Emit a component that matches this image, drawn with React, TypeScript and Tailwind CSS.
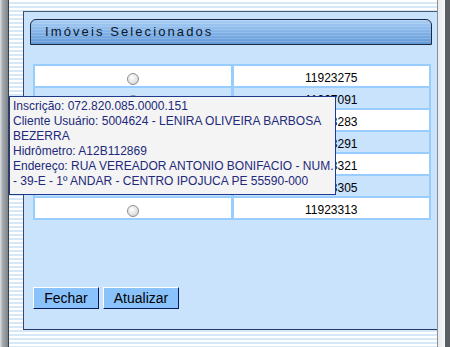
const rows = [
  "11923275",
  "11927091",
  "11923283",
  "11923291",
  "11923321",
  "11923305",
  "11923313",
];

const tooltipLines = [
  "Inscrição: 072.820.085.0000.151",
  "Cliente Usuário: 5004624 - LENIRA OLIVEIRA BARBOSA",
  "BEZERRA",
  "Hidrômetro: A12B112869",
  "Endereço: RUA VEREADOR ANTONIO BONIFACIO - NUM.",
  "- 39-E - 1º ANDAR - CENTRO IPOJUCA PE 55590-000",
];

function Radio() {
  return (
    <span className="block w-[12px] h-[12px] rounded-full border border-[#8e8e8e] bg-[radial-gradient(circle_at_40%_35%,#ffffff_0%,#e4e4e4_55%,#c4c4c4_100%)]" />
  );
}

export default function App() {
  return (
    <div className="relative flex w-[450px] h-[347px] overflow-hidden font-['Liberation_Sans',Arial,sans-serif]">
      {/* left window edge */}
      <div className="w-[8px] h-full bg-[linear-gradient(to_right,#dcdfe2,#a3a8ad_35%,#7e848a)] border-r border-[#3b3f44] box-content" />

      {/* striped page */}
      <div className="flex-1 h-full pt-[11px] pl-[14px] bg-[repeating-linear-gradient(to_bottom,#ffffff_0_2px,#d5e8f7_2px_4px)]">
        <div className="h-[319px] bg-[#cae3fc] border-l border-t border-b border-l-[#3c4a63] border-t-[#4a5a74] border-b-[#26386a] flex flex-col">
          {/* header bar */}
          <div className="mt-[7px] ml-[6px] mr-[5px] h-[26px] rounded-tl-[6px] rounded-tr-[6px] border border-[#1b2a44] bg-[repeating-linear-gradient(to_bottom,rgba(255,255,255,0.16)_0_1px,transparent_1px_3px),linear-gradient(to_bottom,#a9cef4,#82b3e8_50%,#6499d6)] flex items-center pl-[14px]">
            <span className="text-[13px] tracking-[2.1px] text-[#0e1628]">Imóveis Selecionados</span>
          </div>

          {/* table */}
          <div className="mt-[19px] ml-[9px] mr-[6px] bg-[#99ccff] p-[2px] grid grid-cols-2 gap-x-[3px] gap-y-[2px]">
            {rows.map((n, i) => {
              const bg = i % 2 === 0 ? "bg-white" : "bg-[#cae3fc]";
              return [
                <div key={`r${n}`} className={`h-[20px] ${bg} flex items-center justify-center pt-[5px]`}>
                  <Radio />
                </div>,
                <div key={`n${n}`} className={`h-[20px] ${bg} flex items-center justify-center pt-[3px] text-[12px] text-black`}>
                  {n}
                </div>,
              ];
            })}
          </div>

          {/* buttons */}
          <div className="mt-[67px] ml-[9px] flex gap-[4px]">
            <button className="w-[66px] h-[22px] bg-[#8ac2fb] border border-t-white border-l-white border-r-[#0b1858] border-b-[#0b1858] text-[14px] text-black leading-none">
              Fechar
            </button>
            <button className="w-[76px] h-[22px] bg-[#8ac2fb] border border-t-white border-l-white border-r-[#0b1858] border-b-[#0b1858] text-[14px] text-black leading-none">
              Atualizar
            </button>
          </div>
        </div>
      </div>

      {/* right window edge */}
      <div className="w-[13px] h-full flex">
        <div className="w-[1px] bg-[#8c8f93]" />
        <div className="w-[7px] bg-[linear-gradient(to_right,#e8ecef,#f6f8f9)]" />
        <div className="w-[5px] bg-[#5b5e62]" />
      </div>

      {/* tooltip */}
      <div className="absolute left-[9px] top-[96px] w-[327px] h-[99px] bg-[#f4f4f4] border border-[#1d3a8c] pl-[3px] pt-[2px] text-[12px] leading-[15px] text-[#22297a]">
        {tooltipLines.map((l) => (
          <div key={l} className="whitespace-nowrap">
            {l}
          </div>
        ))}
      </div>
    </div>
  );
}
